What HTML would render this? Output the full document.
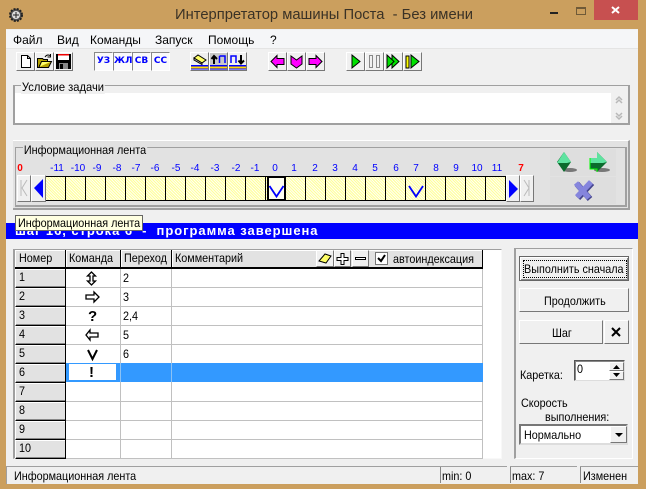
<!DOCTYPE html>
<html lang="ru"><head><meta charset="utf-8"><title>Интерпретатор машины Поста</title>
<style>
html,body{margin:0;padding:0;width:646px;height:489px;overflow:hidden;background:#cb9f5e}
body{position:relative;font:12px "Liberation Sans",sans-serif;color:#000}
.a,.t,.b,.n,.h,.c{position:absolute}
.t{white-space:pre;line-height:14px;transform:scaleX(.9);transform-origin:0 0}
.m{transform:none}
.b{box-sizing:border-box;background:#f0f0f0;border:1px solid;border-color:#fff #777 #777 #fff}
.b svg{position:absolute;left:0;top:0}
.n{font:10px "Liberation Sans",sans-serif;color:#00f;width:24px;text-align:center;top:163px;line-height:11px}
.h{box-sizing:border-box;top:250px;height:18px;background:#e2e2e2;border:1px solid;border-color:#fff #777 #777 #fff;padding-left:3px;line-height:15px;white-space:pre}
.h span{display:inline-block;transform:scaleX(.9);transform-origin:0 0}
.r{border-right-color:#888;border-bottom:1px solid #000;box-shadow:inset 0 -1px 0 #888}
.l{position:absolute;background:#c0c0c0}
.u{position:absolute;font:bold 9px "DejaVu Sans",sans-serif;color:#00f;text-align:center;width:17px;line-height:15px}
.g{border-color:#888 #fff #fff #888;background:#fafafa}
</style></head><body>
<!-- title bar -->
<svg class="a" style="left:8px;top:7px" width="17" height="17" viewBox="0 0 17 17"><circle cx="8" cy="8" r="6" fill="#555" stroke="#222" stroke-width="2" stroke-dasharray="2 1.2"/><circle cx="8" cy="8" r="4" fill="#ddd"/><path d="M8 5v6M5 8h6" stroke="#222"/></svg>
<div class="t m" style="left:175px;top:6px;font-size:14.75px;line-height:18px;color:#3a3226">Интерпретатор машины Поста  - Без имени</div>
<div class="a" style="left:550px;top:12px;width:8px;height:2px;background:#222"></div>
<div class="a" style="left:576px;top:7px;width:8px;height:5px;border:1px solid #6f5a38;border-top-width:2px"></div>
<div class="a" style="left:594px;top:0;width:44px;height:20px;background:#c75050"></div>
<svg class="a" style="left:594px;top:0" width="44" height="20"><path d="M18 7l7 6M25 7l-7 6" stroke="#fff" stroke-width="2"/></svg>
<!-- client -->
<div class="a" style="left:6px;top:29px;width:632px;height:455px;background:#f0f0f0"></div>
<div class="a" style="left:6px;top:30px;width:632px;height:18px;background:#f5f6f8;border-bottom:1px solid #e4e4e4"></div>
<div class="t m" style="left:13px;top:33px">Файл</div><div class="t m" style="left:57px;top:33px">Вид</div><div class="t m" style="left:90px;top:33px">Команды</div><div class="t m" style="left:155px;top:33px">Запуск</div><div class="t m" style="left:208px;top:33px">Помощь</div><div class="t m" style="left:270px;top:33px">?</div>
<!-- toolbar 1 -->
<div class="b" style="left:16px;top:52px;width:19px;height:19px"><svg width="17" height="17"><path d="M4.500 2.500h6l3 3v9h-9z" fill="#fff" stroke="#000"/><path d="M10.500 2.500v3h3" fill="none" stroke="#000"/></svg></div>
<div class="b" style="left:35px;top:52px;width:19px;height:19px"><svg width="17" height="17"><path d="M1.500 14.500v-9h5l1 1h4v2h4l-3 6z" fill="#b3a000" stroke="#000"/><path d="M3 14l2.500-5.500h10" fill="#ffff66" stroke="#000"/><path d="M9 4q2-3 5-1.500M14.500 1v3h-3" fill="none" stroke="#000"/></svg></div>
<div class="b" style="left:54px;top:52px;width:19px;height:19px"><svg width="17" height="17"><path d="M1 1h15v15h-15z" fill="#000"/><rect x="3" y="1" width="11" height="6" fill="#fff"/><rect x="3" y="1" width="11" height="1.500" fill="#e00"/><rect x="4" y="10" width="9" height="6" fill="#888"/><rect x="5" y="11" width="3" height="5" fill="#000"/></svg></div>
<!-- toolbar 2 -->
<div class="b g" style="left:94px;top:52px;width:19px;height:19px"><div class="u" style="left:0;top:1px">УЗ</div></div>
<div class="b g" style="left:113px;top:52px;width:19px;height:19px"><div class="u" style="left:0;top:1px">ЖЛ</div></div>
<div class="b g" style="left:132px;top:52px;width:19px;height:19px"><div class="u" style="left:0;top:1px">СВ</div></div>
<div class="b g" style="left:151px;top:52px;width:19px;height:19px"><div class="u" style="left:0;top:1px">СС</div></div>
<!-- toolbar 3 -->
<div class="b" style="left:190px;top:52px;width:19px;height:19px"><svg width="17" height="17"><path d="M3 5l4-3 8 5-4 3z" fill="#ffff66" stroke="#000"/><path d="M3 5v2l8 4.500v-1.500z" fill="#bbb" stroke="#000"/><rect x="0" y="12" width="17" height="1.500" fill="#00f"/><rect x="0" y="13.500" width="17" height="2" fill="#ffd800"/><rect x="0" y="15.500" width="17" height="1" fill="#00f"/></svg></div>
<div class="b" style="left:209px;top:52px;width:19px;height:19px;background:#c8c8c8"><svg width="17" height="17"><path d="M9.500 3v7M11.500 3h3.500v7M9.500 3h2" fill="none" stroke="#00f" stroke-width="1.500"/><path d="M4 11v-7M1.500 6l2.500-3 3 3" fill="none" stroke="#000" stroke-width="2"/><rect x="0" y="12" width="17" height="1.500" fill="#00f"/><rect x="0" y="13.500" width="17" height="2" fill="#ffd800"/><rect x="0" y="15.500" width="17" height="1" fill="#00f"/></svg></div>
<div class="b" style="left:228px;top:52px;width:19px;height:19px"><svg width="17" height="17"><path d="M2 10v-7h5v7" fill="none" stroke="#00f" stroke-width="1.500"/><path d="M12 2v8M9.500 7.500l2.500 3 3-3" fill="none" stroke="#000" stroke-width="2"/><rect x="0" y="12" width="17" height="1.500" fill="#00f"/><rect x="0" y="13.500" width="17" height="2" fill="#ffd800"/><rect x="0" y="15.500" width="17" height="1" fill="#00f"/></svg></div>
<!-- toolbar 4 -->
<div class="b" style="left:268px;top:52px;width:19px;height:19px"><svg width="17" height="17"><path d="M2 8.500l6-6v3h7v6h-7v3z" fill="#f0f" stroke="#000"/></svg></div>
<div class="b" style="left:287px;top:52px;width:19px;height:19px"><svg width="17" height="17"><path d="M3 3l5.500 4 5.500-4v8l-5.500 4-5.500-4z" fill="#f0f" stroke="#000"/></svg></div>
<div class="b" style="left:306px;top:52px;width:19px;height:19px"><svg width="17" height="17"><path d="M15 8.500l-6-6v3h-7v6h7v3z" fill="#f0f" stroke="#000"/></svg></div>
<!-- toolbar 5 -->
<div class="b" style="left:346px;top:52px;width:19px;height:19px"><svg width="17" height="17"><path d="M5 2l8 6.500-8 6.500z" fill="#00e000" stroke="#000"/></svg></div>
<div class="b" style="left:365px;top:52px;width:19px;height:19px"><svg width="17" height="17"><rect x="3.500" y="2.500" width="3" height="12" fill="none" stroke="#888"/><rect x="10.500" y="2.500" width="3" height="12" fill="none" stroke="#888"/></svg></div>
<div class="b" style="left:384px;top:52px;width:19px;height:19px"><svg width="17" height="17"><path d="M7 2l7 6.500-7 6.500z" fill="#00e000" stroke="#000"/><path d="M2 2l7 6.500-7 6.500z" fill="#00e000" stroke="#000"/></svg></div>
<div class="b" style="left:403px;top:52px;width:19px;height:19px"><svg width="17" height="17"><rect x="2" y="3" width="3" height="12" fill="#ff0" stroke="#000"/><path d="M7 2l8 6.500-8 6.500z" fill="#00e000" stroke="#000"/></svg></div>
<!-- condition -->
<div class="a" style="left:13px;top:85px;width:613px;height:37px;border:2px solid #a0a0a0;border-top-width:1px"></div>
<div class="a" style="left:15px;top:93px;width:596px;height:30px;background:#fff"></div>
<div class="t" style="left:21px;top:80px;padding:0 1px;background:#f0f0f0;transform:scaleX(.93)">Условие задачи</div>
<svg class="a" style="left:611px;top:93px" width="16" height="30"><path d="M5 7l3-3 3 3M5 10l3-3 3 3" fill="none" stroke="#b8b8b8" stroke-width="1.500"/><path d="M5 20l3 3 3-3M5 23l3 3 3-3" fill="none" stroke="#b8b8b8" stroke-width="1.500"/></svg>
<!-- tape panel -->
<div class="a" style="left:13px;top:140px;width:617px;height:70px;background:#e2e2e2;border-top:1px solid #fff;border-right:2px solid #a0a0a0;border-bottom:2px solid #a0a0a0;box-sizing:border-box"></div>
<div class="a" style="left:15px;top:147px;width:612px;height:60px;border:1px solid #a0a0a0;border-right:2px solid #a0a0a0;border-bottom:2px solid #a0a0a0;box-sizing:border-box"></div>
<div class="t" style="left:23px;top:143px;background:#e2e2e2;padding:0 1px">Информационная лента</div>
<div class="a" style="left:550px;top:149px;width:66px;height:27px;background:#dedede"></div>
<div class="a" style="left:550px;top:177px;width:66px;height:27px;background:#dedede"></div>
<div class="n" style="left:8px;color:#f00;font-weight:bold">0</div>
<div class="n" style="left:45px">-11</div><div class="n" style="left:66px">-10</div><div class="n" style="left:85px">-9</div><div class="n" style="left:105px">-8</div><div class="n" style="left:124px">-7</div><div class="n" style="left:143px">-6</div><div class="n" style="left:164px">-5</div><div class="n" style="left:183px">-4</div><div class="n" style="left:203px">-3</div><div class="n" style="left:224px">-2</div><div class="n" style="left:243px">-1</div><div class="n" style="left:263px">0</div><div class="n" style="left:282px">1</div><div class="n" style="left:303px">2</div><div class="n" style="left:323px">3</div><div class="n" style="left:343px">4</div><div class="n" style="left:363px">5</div><div class="n" style="left:384px">6</div><div class="n" style="left:404px">7</div><div class="n" style="left:424px">8</div><div class="n" style="left:444px">9</div><div class="n" style="left:465px">10</div><div class="n" style="left:485px">11</div><div class="n" style="left:509px;color:#f00;font-weight:bold">7</div>
<div class="a" style="left:45px;top:176px;width:461px;height:25px;box-sizing:border-box;border-top:1px solid #000;border-bottom:1px solid #000;background:repeating-linear-gradient(90deg,#000 0,#000 1px,transparent 1px,transparent 20px),repeating-linear-gradient(45deg,#ffff9c 0,#ffff9c 1px,#fffff0 1px,#fffff0 2px)"></div>
<div class="a" style="left:267px;top:176px;width:19px;height:25px;box-sizing:border-box;border:2px solid #000;background:#fffff0"></div>
<svg class="a" style="left:45px;top:176px" width="400" height="25"><path d="M224.500 10l7 10.500 7-10.500M364 10l7 10.500 7-10.500" fill="none" stroke="#00f" stroke-width="1.800"/></svg>
<div class="b" style="left:17px;top:175px;width:14px;height:27px"><svg width="12" height="25"><path d="M3 4v16M9 4l-5 8 5 8" fill="none" stroke="#bbb"/></svg></div>
<div class="b" style="left:31px;top:175px;width:15px;height:27px"><svg width="13" height="25"><path d="M2 12l9-9v19z" fill="#00f"/></svg></div>
<div class="b" style="left:506px;top:175px;width:14px;height:27px"><svg width="12" height="25"><path d="M2 4l9 9-9 9z" fill="#00f"/></svg></div>
<div class="b" style="left:520px;top:175px;width:14px;height:27px"><svg width="12" height="25"><path d="M8 4v16M3 4l5 8-5 8" fill="none" stroke="#bbb"/></svg></div>
<svg class="a" style="left:555px;top:150px" width="60" height="52">
<ellipse cx="15" cy="20" rx="7" ry="2" fill="#777"/>
<path d="M9 2l7 10-7 10-7-10z" fill="#0b6b2d"/><path d="M9 2l7 10-4 1h-10z" fill="#5fe3a0"/>
<ellipse cx="47" cy="20" rx="8" ry="2" fill="#777"/>
<path d="M42 2l10 10-10 10v-3h-7v-11h7z" fill="#0b6b2d"/><path d="M42 2l10 10-4 1h-13v-5h7z" fill="#5fe3a0"/><path d="M35 8v11h7v3" fill="none" stroke="#0f0"/>
<path d="M21 33l13 15M36 32l-14 15" stroke="#44448c" stroke-width="6" transform="translate(1 1)"/>
<path d="M21 33l13 15M36 32l-14 15" stroke="#8585dd" stroke-width="5.500"/></svg>
<!-- blue bar -->
<div class="a" style="left:6px;top:223px;width:632px;height:16px;background:#00f"></div>
<div class="t m" style="left:15px;top:224px;color:#fff;font:bold 13px/14px 'Liberation Sans',sans-serif;letter-spacing:.95px">шаг 16, строка 6  -  программа завершена</div>
<div class="a" style="left:15px;top:215px;width:126px;height:14px;background:#ffffe1;border:1px solid #666"></div>
<div class="t" style="left:18px;top:216px">Информационная лента</div>
<!-- grid -->
<div class="a" style="left:13px;top:249px;width:489px;height:210px;background:#fff;border-top:1px solid #a0a0a0;border-left:2px solid #a0a0a0;box-sizing:border-box;border-right:1px solid #f8f8f8;border-bottom:1px solid #f8f8f8"></div>
<div class="h" style="left:15px;width:51px"><span>Номер</span></div>
<div class="h" style="left:66px;width:55px;padding-left:2px"><span>Команда</span></div>
<div class="h" style="left:121px;width:51px;padding-left:2px"><span>Переход</span></div>
<div class="h" style="left:172px;width:311px;padding-left:2px"><span>Комментарий</span></div>
<div class="a" style="left:15px;top:267px;width:468px;height:2px;background:#000"></div>
<div class="a" style="left:65px;top:250px;width:1px;height:18px;background:#000"></div>
<div class="a" style="left:120px;top:250px;width:1px;height:18px;background:#000"></div>
<div class="a" style="left:171px;top:250px;width:1px;height:18px;background:#000"></div>
<div class="a" style="left:482px;top:250px;width:1px;height:18px;background:#000"></div>
<div class="l" style="left:120px;top:269px;width:1px;height:190px"></div>
<div class="l" style="left:171px;top:269px;width:1px;height:190px"></div>
<div class="l" style="left:482px;top:269px;width:1px;height:190px"></div>
<div class="l" style="left:66px;top:287px;width:417px;height:1px"></div><div class="l" style="left:66px;top:306px;width:417px;height:1px"></div><div class="l" style="left:66px;top:325px;width:417px;height:1px"></div><div class="l" style="left:66px;top:344px;width:417px;height:1px"></div><div class="l" style="left:66px;top:363px;width:417px;height:1px"></div><div class="l" style="left:66px;top:401px;width:417px;height:1px"></div><div class="l" style="left:66px;top:420px;width:417px;height:1px"></div><div class="l" style="left:66px;top:439px;width:417px;height:1px"></div><div class="l" style="left:66px;top:458px;width:417px;height:1px"></div>
<div class="a" style="left:66px;top:363px;width:417px;height:19px;background:#3399ff"></div>
<div class="a" style="left:69px;top:364px;width:47px;height:16px;background:#fff"></div>
<div class="l" style="left:120px;top:363px;width:1px;height:19px;background:#8cc2f5"></div>
<div class="l" style="left:171px;top:363px;width:1px;height:19px;background:#8cc2f5"></div>
<div class="h r" style="left:15px;top:269px;width:51px;height:19px"><span>1</span></div><div class="h r" style="left:15px;top:288px;width:51px;height:19px"><span>2</span></div><div class="h r" style="left:15px;top:307px;width:51px;height:19px"><span>3</span></div><div class="h r" style="left:15px;top:326px;width:51px;height:19px"><span>4</span></div><div class="h r" style="left:15px;top:345px;width:51px;height:19px"><span>5</span></div><div class="h r" style="left:15px;top:364px;width:51px;height:19px"><span>6</span></div><div class="h r" style="left:15px;top:383px;width:51px;height:19px"><span>7</span></div><div class="h r" style="left:15px;top:402px;width:51px;height:19px"><span>8</span></div><div class="h r" style="left:15px;top:421px;width:51px;height:19px"><span>9</span></div><div class="h r" style="left:15px;top:440px;width:51px;height:19px"><span>10</span></div>
<div class="a" style="left:65px;top:269px;width:1px;height:190px;background:#000"></div>
<svg class="a" style="left:80px;top:269px" width="24" height="114"><path d="M11.500 3l-4 4h2.500v5h-2.500l4 4 4-4h-2.500v-5h2.500z" fill="none" stroke="#000" stroke-width="1.300"/><path d="M6 26h8v-3l5 5-5 5v-3h-8z" fill="none" stroke="#000" stroke-width="1.300"/><path d="M18 64h-8v-3l-4 5 4 5v-3h8z" fill="none" stroke="#000" stroke-width="1.300"/><path d="M8 81l4.500 9 4.500-9" fill="none" stroke="#000" stroke-width="2"/></svg>
<div class="t m" style="left:88px;top:308px;font:bold 15px/17px 'Liberation Sans',sans-serif">?</div>
<div class="t m" style="left:89px;top:364px;font:bold 15px/17px 'Liberation Sans',sans-serif">!</div>
<div class="t" style="left:123px;top:271px">2</div><div class="t" style="left:123px;top:290px">3</div><div class="t" style="left:123px;top:309px">2,4</div><div class="t" style="left:123px;top:328px">5</div><div class="t" style="left:123px;top:347px">6</div>
<!-- header tools -->
<div class="b" style="left:316px;top:250px;width:18px;height:17px"><svg width="16" height="15"><path d="M2 10l6-7 6 2-5 7z" fill="#ffff66" stroke="#000"/></svg></div>
<div class="b" style="left:334px;top:250px;width:17px;height:17px"><svg width="15" height="15"><path d="M6 2.500h3v4h4v3h-4v4h-3v-4h-4v-3h4z" fill="#fff" stroke="#000"/></svg></div>
<div class="b" style="left:352px;top:250px;width:17px;height:17px"><svg width="15" height="15"><rect x="2.500" y="6.500" width="10" height="2" fill="#fff" stroke="#000"/></svg></div>
<div class="a" style="left:375px;top:252px;width:11px;height:11px;background:#fff;border:1px solid #777"></div>
<svg class="a" style="left:375px;top:252px" width="13" height="13"><path d="M3 6l3 3 4-6" fill="none" stroke="#000" stroke-width="2"/></svg>
<div class="t" style="left:393px;top:252px">автоиндексация</div>
<!-- right panel -->
<div class="a" style="left:514px;top:248px;width:119px;height:211px;box-sizing:border-box;border-left:2px solid #a0a0a0;border-top:1px solid #a0a0a0;border-right:1px solid #fff;border-bottom:1px solid #fff"></div>
<div class="b" style="left:519px;top:256px;width:110px;height:25px;border:1px solid #666;box-shadow:inset 1px 1px 0 #fff,inset -1px -1px 0 #888"></div>
<div class="a" style="left:523px;top:260px;width:102px;height:16px;border:1px dotted #000"></div>
<div class="t" style="left:524px;top:262px">Выполнить сначала</div>
<div class="b" style="left:519px;top:288px;width:110px;height:24px"></div>
<div class="t" style="left:544px;top:294px">Продолжить</div>
<div class="b" style="left:519px;top:320px;width:84px;height:24px"></div>
<div class="t" style="left:552px;top:326px">Шаг</div>
<div class="b" style="left:604px;top:320px;width:25px;height:24px"></div>
<svg class="a" style="left:604px;top:320px" width="25" height="24"><path d="M8 8l8 8M16 8l-8 8" stroke="#000" stroke-width="2"/></svg>
<div class="t" style="left:520px;top:368px">Каретка:</div>
<div class="a" style="left:574px;top:360px;width:51px;height:21px;box-sizing:border-box;background:#fff;border:1px solid;border-color:#555 #ddd #ddd #555;box-shadow:inset 1px 1px 0 #888"></div>
<div class="t" style="left:577px;top:362px">0</div>
<div class="b" style="left:609px;top:362px;width:15px;height:9px"><svg width="13" height="7"><path d="M3 6l3.500-4 3.500 4z"/></svg></div>
<div class="b" style="left:609px;top:371px;width:15px;height:9px"><svg width="13" height="7"><path d="M3 1l3.500 4 3.500-4z"/></svg></div>
<div class="t" style="left:521px;top:396px">Скорость</div>
<div class="t" style="left:545px;top:410px">выполнения:</div>
<div class="a" style="left:519px;top:424px;width:109px;height:21px;box-sizing:border-box;background:#fff;border:2px solid #777;border-right-color:#ddd;border-bottom-color:#ddd"></div>
<div class="t" style="left:524px;top:428px">Нормально</div>
<div class="b" style="left:610px;top:426px;width:17px;height:17px"><svg width="15" height="15"><path d="M4 6h8l-4 4z"/></svg></div>
<!-- status -->
<div class="a" style="left:6px;top:466px;width:632px;height:1px;background:#a0a0a0"></div>
<div class="a" style="left:6px;top:466px;width:1px;height:18px;background:#a0a0a0"></div>
<div class="a" style="left:440px;top:467px;width:67px;height:16px;border-left:1px solid #888"></div>
<div class="a" style="left:510px;top:467px;width:67px;height:16px;border-left:1px solid #888"></div>
<div class="a" style="left:580px;top:467px;width:57px;height:16px;border-left:1px solid #888"></div>
<div class="a" style="left:507px;top:466px;width:3px;height:18px;background:#f0f0f0"></div>
<div class="a" style="left:577px;top:466px;width:3px;height:18px;background:#f0f0f0"></div>
<div class="t" style="left:14px;top:469px">Информационная лента</div>
<div class="t" style="left:442px;top:469px">min: 0</div>
<div class="t" style="left:512px;top:469px">max: 7</div>
<div class="t" style="left:583px;top:469px">Изменен</div>
</body></html>
